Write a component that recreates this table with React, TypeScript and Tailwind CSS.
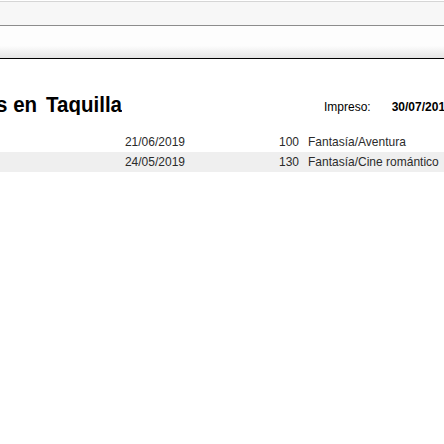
export default function App() {
  const rows = [
    { date: '21/06/2019', count: 100, genre: 'Fantasía/Aventura', alt: false },
    { date: '24/05/2019', count: 130, genre: 'Fantasía/Cine romántico', alt: true },
  ];

  return (
    <div className="w-[444px] h-[444px] overflow-hidden bg-white font-['Liberation_Sans',Arial,sans-serif]">
      {/* Barra del visor */}
      <div className="h-px bg-white" />
      <div className="h-px bg-[#d6d6d6]" />
      <div className="h-[23px] bg-[#f7f7f7]" />
      <div className="h-px bg-[#8c8c8c]" />
      <div className="h-[32px] bg-[linear-gradient(to_bottom,#fdfdfd_62%,#e4e4e4)]" />
      <div className="h-px bg-black" />

      {/* Encabezado del informe */}
      <div className="mt-[33px] flex items-baseline whitespace-nowrap">
        <div className="w-[122px] shrink-0 overflow-hidden flex justify-end">
          <h1 className="text-[20.5px] font-bold text-black leading-[23px] scale-y-[1.1]">
            Películas en<span className="ml-[9px]">Taquilla</span>
          </h1>
        </div>
        <span className="ml-[202px] text-[12px] text-black inline-block scale-y-[1.1]">Impreso:</span>
        <span className="ml-[21px] text-[12px] font-bold text-black inline-block scale-y-[1.1]">30/07/2019</span>
      </div>

      {/* Filas */}
      <div className="mt-[16px]">
        {rows.map((r) => (
          <div
            key={r.date}
            className={`grid grid-cols-[185px_114px_1fr] h-[20px] items-center text-[12px] text-[#2b2b2b] whitespace-nowrap ${r.alt ? 'bg-[#efefef]' : ''}`}
          >
            <span className="text-right scale-y-[1.1]">{r.date}</span>
            <span className="text-right scale-y-[1.1]">{r.count}</span>
            <span className="pl-[9px] scale-y-[1.1]">{r.genre}</span>
          </div>
        ))}
      </div>
    </div>
  );
}
